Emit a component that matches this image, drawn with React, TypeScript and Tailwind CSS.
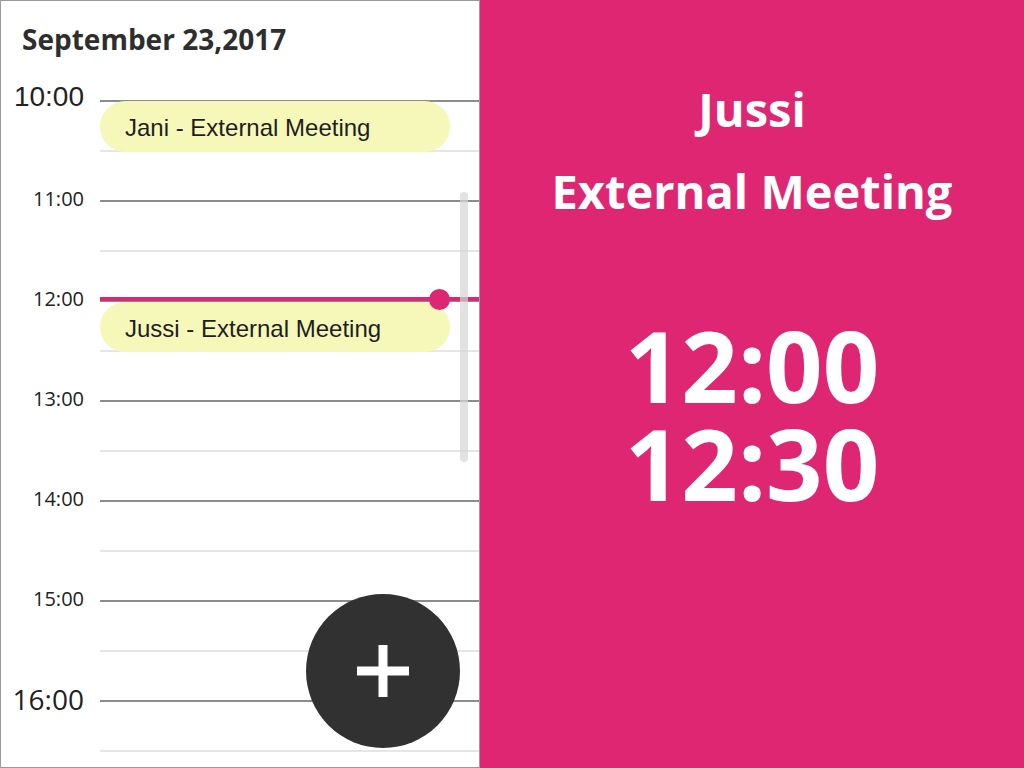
import React from "react";

const rows = [
  { label: "10:00", big: true, font: "'Liberation Sans', Arial, sans-serif" },
  { label: "" },
  { label: "11:00" },
  { label: "" },
  { label: "12:00" },
  { label: "" },
  { label: "13:00" },
  { label: "" },
  { label: "14:00" },
  { label: "" },
  { label: "15:00" },
  { label: "" },
  { label: "16:00", big: true },
  { label: "" },
];

export default function App() {
  return (
    <div
      className="w-[1024px] h-[768px] flex overflow-hidden bg-white"
      style={{ fontFamily: "'Open Sans', sans-serif" }}
    >
      <div className="w-[480px] h-[768px] border border-[#9a9a9a] flex flex-col shrink-0 overflow-hidden">
        <div className="h-[99px] shrink-0 pl-[21px] pt-[20px]">
          <div className="text-[28px] leading-[36px] font-bold text-[#2e2e2e]">
            September 23,2017
          </div>
        </div>
        <div className="relative shrink-0">
          {rows.map((r, i) => (
            <div key={i} className="flex h-[50px]">
              <div className="w-[99px] relative">
                {r.label && (
                  <div
                    className={
                      "absolute right-[16px] top-[-1px] -translate-y-1/2 leading-none text-[#222] " +
                      (r.big ? "text-[28px]" : "text-[20px]")
                    }
                    style={r.font ? { fontFamily: r.font, fontSize: 28, top: -3 } : undefined}
                  >
                    {r.label}
                  </div>
                )}
              </div>
              <div
                className={
                  "flex-1 border-t-2 " +
                  (r.label ? "border-[#8c8c8c]" : "border-[#e6e6e6]")
                }
              />
            </div>
          ))}

          <div
            className="absolute left-[99px] top-[1px] w-[350px] h-[51px] rounded-full bg-[#f6f8ba] flex items-center pl-[25px] pt-[3px] text-[24px] text-[#1e1e1e]"
            style={{ fontFamily: "'Liberation Sans', Arial, sans-serif" }}
          >
            Jani - External Meeting
          </div>
          <div
            className="absolute left-[99px] top-[202px] w-[350px] h-[50px] rounded-full bg-[#f6f8ba] flex items-center pl-[25px] pt-[3px] text-[24px] text-[#1e1e1e]"
            style={{ fontFamily: "'Liberation Sans', Arial, sans-serif" }}
          >
            Jussi - External Meeting
          </div>

          <div className="absolute left-[99px] right-0 top-[197px] h-[4px] bg-[#df2673]" />
          <div className="absolute left-[428px] top-[189px] w-[21px] h-[21px] rounded-full bg-[#df2673]" />

          <div className="absolute left-[459px] top-[92px] w-[8px] h-[270px] rounded-full bg-[#d6d6d6]/70" />

          <div className="absolute left-[305px] top-[494px] w-[154px] h-[154px] rounded-full bg-[#313131] flex items-center justify-center">
            <svg width="52" height="52" viewBox="0 0 52 52">
              <rect x="0" y="21.5" width="52" height="9" fill="#fff" />
              <rect x="21.5" y="0" width="9" height="52" fill="#fff" />
            </svg>
          </div>
        </div>
      </div>

      <div className="flex-1 h-[768px] bg-[#df2673] flex flex-col items-center pt-[68px] text-white font-bold">
        <div className="text-[47px] leading-[82px]">Jussi</div>
        <div className="text-[47px] leading-[82px]">External Meeting</div>
        <div className="mt-[84px] text-[99px] leading-[98px]">12:00</div>
        <div className="text-[99px] leading-[98px]">12:30</div>
      </div>
    </div>
  );
}
